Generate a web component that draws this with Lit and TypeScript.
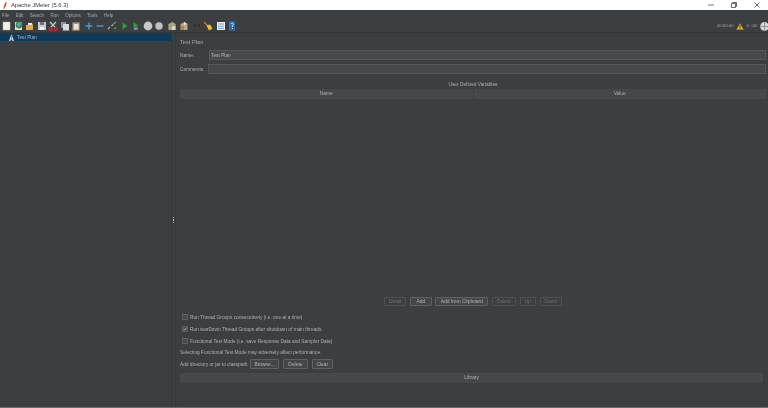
import { LitElement, html, css, svg } from "lit";
import { customElement } from "lit/decorators.js";

const icons: [number, unknown][] = [
  [0, svg`<rect x="1" y="1" width="7" height="8" fill="#f4f1dc" stroke="#bbb" stroke-width=".5"/>`],
  [1, svg`<rect x="1" y="1" width="7" height="8" fill="#dfe6d8"/><circle cx="5" cy="4" r="3.4" fill="#3b8f3d"/><path d="M3 3l3-2 1 3-3 2z" fill="#5aa0d8"/>`],
  [2, svg`<path d="M1 4h3l1-2h2l1 2v5H1z" fill="#e5a93c"/><path d="M3 2h4v2H3z" fill="#eee"/>`],
  [3, svg`<rect x="1" y="1" width="8" height="8" fill="#c9ccd0"/><rect x="3" y="1" width="4" height="3" fill="#6b7075"/><rect x="3" y="6" width="4" height="3" fill="#f0f0f0"/>`],
  [4, svg`<path d="M2 1l5 5M8 1L3 6" stroke="#c9c9c9" stroke-width="1.2"/><circle cx="2.5" cy="8" r="1.5" fill="none" stroke="#d8262c" stroke-width="1.2"/><circle cx="7.5" cy="8" r="1.5" fill="none" stroke="#d8262c" stroke-width="1.2"/>`],
  [5, svg`<rect x="1" y="1" width="5" height="6" fill="#8f9397"/><rect x="3" y="3" width="6" height="6.5" fill="#d8dadc"/>`],
  [6, svg`<rect x="1.5" y="1.5" width="7" height="8" fill="#c9a76c"/><rect x="3" y="3" width="4.5" height="5.5" fill="#e2e2e0"/><rect x="3.5" y="1" width="3" height="1.5" fill="#777"/>`],
  [7, svg`<path d="M5 1.5v7M1.5 5h7" stroke="#4a9ad8" stroke-width="1.4"/>`],
  [8, svg`<path d="M1.5 5h7" stroke="#4a9ad8" stroke-width="1.4"/>`],
  [9, svg`<path d="M1 8l2-2M4.5 5l1.5-1.5" stroke="#a9b2b8" stroke-width="1.2"/><path d="M6.5 3L9 1M7 8l2-1.5" stroke="#58b05a" stroke-width="1.2"/>`],
  [10, svg`<path d="M2.5 1.5v7L7.500 5z" fill="#1fa23a"/>`],
  [11, svg`<path d="M2.500 1v7L7 4.500z" fill="#1fa23a"/><rect x="4.500" y="6" width="2.500" height="3" fill="#d84a6a"/><rect x="3" y="7" width="2" height="2" fill="#5aa0d8"/>`],
  [12, svg`<circle cx="5" cy="5" r="4.4" fill="#c6c8ca"/>`],
  [13, svg`<circle cx="5" cy="5" r="3.7" fill="#bfc1c3"/>`],
  [14, svg`<path d="M1.5 3l4-2 3 2v6h-7z" fill="#b9a37c"/><path d="M1.5 3l4 1 3-1v2l-3 1-4-1z" fill="#8aa67a"/><rect x="5" y="5" width="3.5" height="4" fill="#d8d2c2"/>`],
  [15, svg`<path d="M1.5 3l4-2 3 2v6h-7z" fill="#c0a678"/><path d="M5 1l3 2-3 1z" fill="#ece6d8"/><rect x="2" y="5" width="3" height="4" fill="#a08858"/>`],
  [16, svg`<circle cx="2.8" cy="6" r="1.9" fill="#4d3a2c"/><circle cx="7.2" cy="6" r="1.9" fill="#4d3a2c"/><rect x="2" y="3" width="2" height="3" fill="#3a2c22"/><rect x="6" y="3" width="2" height="3" fill="#3a2c22"/>`],
  [17, svg`<path d="M1 1l4 4" stroke="#c77f2c" stroke-width="1.1"/><path d="M3.5 4.5L7 3.5l2.5 4-3.5 2z" fill="#eec12a"/>`],
  [18, svg`<rect x="1" y="1" width="8" height="8" fill="#eef2f6"/><path d="M2 3h6M2 5.200h6M2 7.400h6" stroke="#3c7fc4" stroke-width=".7"/>`],
  [19, svg`<rect x="2" y=".5" width="6" height="9" fill="#2e6fb3"/><path d="M4 3a1.2 1.2 0 1 1 1.5 1.3V6M5.500 7v1" stroke="#dbe8f5" stroke-width=".8" fill="none"/>`],
];
const gapsAfter = new Set([6, 9, 13, 15, 17]);

@customElement("app-root")
export class AppRoot extends LitElement {
  static styles = css`
    :host { display: block; width: 768px; height: 408px; overflow: hidden; background: #3c3f41; color: #b3b6b8;
      font-family: "Liberation Sans", Arial, sans-serif; font-size: 4.8px; line-height: 1; filter: blur(0.3px); }
    .title { height: 10px; background: #fff; color: #3a3a3a; display: flex; align-items: center; font-size: 5.800px; }
    .feather { width: 6px; height: 9px; margin: 0 3px 0 2px; flex: none; }
    .title-text { flex: 1; padding-top: 2px; }
    .winbtns { display: flex; align-items: center; gap: 17px; padding-right: 8px; }
    .winbtns svg { display: block; }
    .menu { height: 10px; box-sizing: border-box; padding-top: 2px; display: flex; align-items: center; gap: 6.400px; padding-left: 2px; color: #a5a8aa; background: #3c3f41; font-size: 4.500px; }
    .toolbar { height: 12px; display: flex; align-items: center; padding-left: 2px; border-bottom: 1px solid #333638; }
    .tool { width: 10px; height: 10px; margin-right: 1.500px; display: block; flex: none; }
    .tool.sep { margin-right: 2.900px; }
    .status { margin-left: auto; display: flex; align-items: center; color: #a5a8aa; gap: 2.500px; font-size: 4.300px; margin-right: -1px; }
    .status span { padding-top: 1px; }
    .status svg { display: block; }
    .main { height: 374px; display: flex; border-bottom: 1px solid #6a6d6f; }
    .tree { width: 171px; flex: none; }
    .sel { height: 8px; background: #0e3a5c; display: flex; align-items: center; padding-left: 9px; gap: 3px; color: #a9b2ba; }
    .sel span { padding-top: 2px; }
    .sel svg { display: block; }
    .divider { width: 5px; box-sizing: border-box; flex: none; border-left: 1px solid #35383a; border-right: 1px solid #35383a; display: flex; flex-direction: column; align-items: center; justify-content: center; gap: 1px; }
    .dot { width: 1.500px; height: 1.500px; background: #b8babc; }
    .panel { flex: 1; min-width: 0; padding: 6px 2px 4px 4px; display: flex; flex-direction: column; }
    .heading { font-size: 5.700px; color: #a3a6a8; height: 8px; box-sizing: border-box; padding-top: 1px; margin-bottom: 3px; }
    .row { display: flex; align-items: center; color: #adb0b2; height: 10px; }
    .row.name { margin-bottom: 4px; }
    .row.comments { margin-bottom: 6px; }
    .row .lbl { flex: none; padding-top: 2px; }
    .name .lbl { width: 29px; }
    .comments .lbl { width: 28px; }
    .field { flex: 1; height: 100%; background: #45494a; border: 1px solid #55585a; box-sizing: border-box; display: flex; align-items: center; padding: 2px 0 0 1px; color: #b5b8ba; }
    .caption { height: 8px; box-sizing: border-box; padding-top: 2px; display: flex; align-items: center; justify-content: center; color: #adb0b2; margin-bottom: 1px; }
    .thead { height: 9.500px; background: #45494a; display: flex; color: #adb0b2; flex: none; }
    .thead span { flex: 1; display: flex; align-items: center; justify-content: center; padding-top: 2px; }
    .thead span + span { border-left: 1px solid #3c3f41; }
    .grow { flex: 1; }
    .buttons { display: flex; justify-content: center; gap: 3.600px; margin-bottom: 5px; }
    .btn { height: 10px; box-sizing: border-box; border: 1px solid #5e6264; border-radius: 1px; background: #43474a; color: #b3b6b8; padding: 2px 4.500px 0; display: flex; align-items: center; justify-content: center; font-size: 4.900px; }
    .buttons .btn { height: 9.500px; }
    .buttons .add { padding-left: 5.500px; padding-right: 5.500px; }
    .btn.off { color: #6d7072; background: transparent; border-color: #4e5254; padding-left: 4px; padding-right: 4px; }
    .check { height: 12px; display: flex; align-items: center; padding-left: 2px; gap: 2px; color: #adb0b2; }
    .check span { padding-top: 2px; }
    .box { width: 6px; height: 6px; box-sizing: border-box; border: 1px solid #5d6163; background: #45494a; display: block; flex: none; }
    .note { height: 11px; box-sizing: border-box; padding-top: 2px; display: flex; align-items: center; color: #adb0b2; }
    .cp { height: 12px; display: flex; align-items: center; color: #adb0b2; }
    .cp .txt { padding-top: 2px; }
    .cp .btn { margin-left: 4px; }
    .cp .browse { margin-left: 3px; padding-left: 3px; padding-right: 3px; }
    .cp .clear { padding-left: 3.500px; padding-right: 3.500px; }
    .lib { height: 30px; box-sizing: border-box; margin: 3px 3px 0 0; border-bottom: 1px solid #363a3c; flex: none; }
  `;

  render() {
    return html`
      <div class="title">
        <svg class="feather" viewBox="0 0 6 9"><path d="M4.500 .5C2.500 2 1.800 5 1.500 8.500 3.500 6.500 4.800 3.500 4.500 .5z" fill="#d8402a"/></svg>
        <span class="title-text">Apache JMeter (5.6.3)</span>
        <div class="winbtns">
          <svg width="6" height="6" viewBox="0 0 6 6"><path d="M0 3h6" stroke="#555" stroke-width=".8"/></svg>
          <svg width="6" height="6" viewBox="0 0 6 6"><path d="M.5 1.500h4v4h-4zM1.500 1.500V.5h4v4h-1" fill="none" stroke="#444" stroke-width=".8"/></svg>
          <svg width="6" height="6" viewBox="0 0 6 6"><path d="M.5.5l5 5M5.500.5l-5 5" stroke="#444" stroke-width=".8"/></svg>
        </div>
      </div>
      <div class="menu">
        ${["File", "Edit", "Search", "Run", "Options", "Tools", "Help"].map((m) => html`<span>${m}</span>`)}
      </div>
      <div class="toolbar">
        ${icons.map(([i, p]) => html`<svg class="tool ${gapsAfter.has(i as number) ? "sep" : ""}" viewBox="0 0 10 10">${p}</svg>`)}
        <div class="status">
          <span>00:00:00</span>
          <svg width="8" height="7" viewBox="0 0 9 8"><path d="M4.500 .3L8.800 7.700H.2z" fill="#e8b71c" stroke="#57501c" stroke-width=".4"/><path d="M4.500 2.500v3M4.500 6.200v.8" stroke="#222" stroke-width=".9"/></svg>
          <span>0</span>
          <span>0/0</span>
          <svg width="9" height="9" viewBox="0 0 9 9"><circle cx="4.500" cy="4.500" r="4.400" fill="#d6d8da"/><path d="M4.500 0v9M0 4.500h9" stroke="#77797b" stroke-width=".7"/></svg>
        </div>
      </div>
      <div class="main">
        <div class="tree">
          <div class="sel">
            <svg width="5" height="7" viewBox="0 0 5 7"><path d="M2.500 0L4 4 5 7H3.500L2.500 5 1.500 7H0l1-3z" fill="#c9d3e8"/><path d="M2.500 1.500v3" stroke="#3f6fc0" stroke-width=".8"/></svg>
            <span>Test Plan</span>
          </div>
        </div>
        <div class="divider"><i class="dot"></i><i class="dot"></i><i class="dot"></i></div>
        <div class="panel">
          <div class="heading">Test Plan</div>
          <div class="row name"><span class="lbl">Name:</span><div class="field">Test Plan</div></div>
          <div class="row comments"><span class="lbl">Comments:</span><div class="field"></div></div>
          <div class="caption">User Defined Variables</div>
          <div class="thead"><span>Name</span><span>Value</span></div>
          <div class="grow"></div>
          <div class="buttons">
            <span class="btn off">Detail</span>
            <span class="btn add">Add</span>
            <span class="btn">Add from Clipboard</span>
            <span class="btn off">Delete</span>
            <span class="btn off">Up</span>
            <span class="btn off">Down</span>
          </div>
          <div class="check"><i class="box"></i><span>Run Thread Groups consecutively (i.e. one at a time)</span></div>
          <div class="check">
            <svg class="box" viewBox="0 0 4 4"><path d="M.5 2l1 1.200L3.500.6" fill="none" stroke="#c8cacc" stroke-width=".8"/></svg>
            <span>Run tearDown Thread Groups after shutdown of main threads</span>
          </div>
          <div class="check"><i class="box"></i><span>Functional Test Mode (i.e. save Response Data and Sampler Data)</span></div>
          <div class="note">Selecting Functional Test Mode may adversely affect performance.</div>
          <div class="cp">
            <span class="txt">Add directory or jar to classpath</span>
            <span class="btn browse">Browse...</span>
            <span class="btn">Delete</span>
            <span class="btn clear">Clear</span>
          </div>
          <div class="lib"><div class="thead"><span>Library</span></div></div>
        </div>
      </div>
    `;
  }
}
